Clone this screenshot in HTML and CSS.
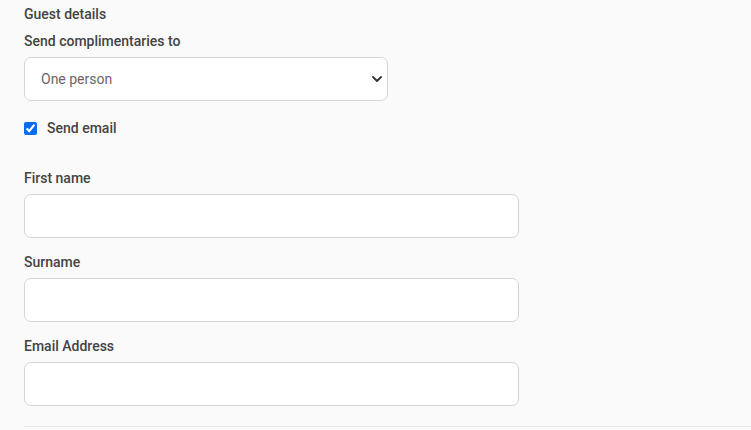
FILE: index.html
```html
<!DOCTYPE html>
<html lang="en">
<head>
<meta charset="utf-8">
<title>Guest details</title>
<link rel="stylesheet" href="styles.css">
</head>
<body>
<form class="form">
  <div class="section-title">Guest details</div>
  <div class="field field-select">
    <label class="label" for="send-to">Send complimentaries to</label>
    <div class="select-wrap">
      <select id="send-to" class="select">
        <option>One person</option>
      </select>
      <svg class="chevron" viewBox="0 0 10 6" width="10" height="6" aria-hidden="true"><path d="M1 1l4 4 4-4" fill="none" stroke="#333" stroke-width="1.8" stroke-linecap="round" stroke-linejoin="round"/></svg>
    </div>
  </div>
  <label class="check-row">
    <input type="checkbox" class="check" checked>
    <span>Send email</span>
  </label>
  <div class="field field-first">
    <label class="label" for="first">First name</label>
    <input id="first" class="input" type="text">
  </div>
  <div class="field">
    <label class="label" for="surname">Surname</label>
    <input id="surname" class="input" type="text">
  </div>
  <div class="field">
    <label class="label" for="email">Email Address</label>
    <input id="email" class="input" type="email">
  </div>
  <hr class="divider">
</form>
</body>
</html>
```
FILE: styles.css
```css
html, body {
  margin: 0;
  padding: 0;
  background: #fafafa;
}
body {
  font-family: Roboto, "Liberation Sans", sans-serif;
  font-size: 14px;
  color: #444;
}
.form {
  padding: 4px 0 0 24px;
  display: flex;
  flex-direction: column;
}
.section-title {
  font-weight: 500;
  line-height: 20px;
}
.field {
  display: flex;
  flex-direction: column;
  margin-top: 14px;
}
.field-select {
  margin-top: 7px;
}
.field-first {
  margin-top: 30px;
}
.label {
  font-weight: 500;
  line-height: 20px;
  margin-bottom: 6px;
}
.select-wrap {
  position: relative;
  width: 364px;
}
.select {
  appearance: none;
  -webkit-appearance: none;
  width: 364px;
  height: 44px;
  box-sizing: border-box;
  border: 1px solid #d4d4d4;
  border-radius: 7px;
  background: #fff;
  padding: 0 16px;
  font-family: Roboto, "Liberation Sans", sans-serif;
  font-size: 14px;
  color: #666;
  margin: 0;
}
.chevron {
  position: absolute;
  right: 6px;
  top: 19px;
  pointer-events: none;
}
.check-row {
  display: flex;
  align-items: center;
  margin-top: 17px;
  line-height: 20px;
  font-weight: 500;
}
.check {
  width: 13px;
  height: 13px;
  margin: 0 10px 0 0;
  accent-color: #0b6bf0;
}
.input {
  width: 495px;
  height: 44px;
  box-sizing: border-box;
  border: 1px solid #d4d4d4;
  border-radius: 7px;
  background: #fff;
  padding: 0 16px;
  margin: 0;
  font-family: Roboto, "Liberation Sans", sans-serif;
  font-size: 14px;
}
.divider {
  border: 0;
  border-top: 1px solid #e6e6e6;
  margin: 20px 0 0 0;
}
```
